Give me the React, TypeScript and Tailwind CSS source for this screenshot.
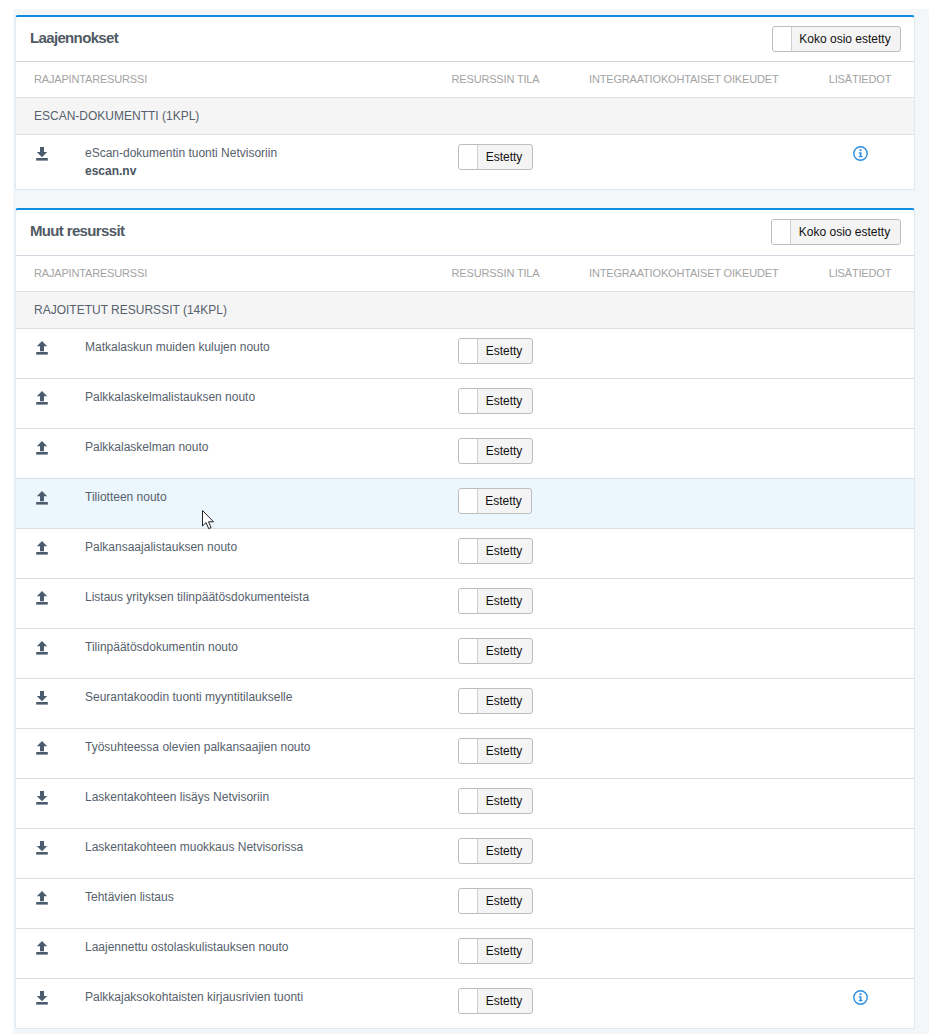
const cols = "grid grid-cols-[69px_340px_141px_240px_108px]";

function DownloadIcon() {
  return (
    <svg width="12" height="14" viewBox="0 0 12 14" className="block" fill="#4a5c6e">
      <path d="M4 0h4v5h3.2L6 10.2 0.8 5H4z" />
      <rect x="0.2" y="11" width="11.6" height="2.6" />
    </svg>
  );
}

function UploadIcon() {
  return (
    <svg width="12" height="14" viewBox="0 0 12 14" className="block" fill="#4a5c6e">
      <path d="M6 0l5.2 5.2H8v5H4v-5H0.8z" />
      <rect x="0.2" y="11" width="11.6" height="2.6" />
    </svg>
  );
}

function InfoIcon() {
  return (
    <svg width="15" height="15" viewBox="0 0 15 15" className="block">
      <circle cx="7.5" cy="7.5" r="6.7" fill="none" stroke="#2b8fe3" strokeWidth="1.4" />
      <rect x="6.6" y="3.2" width="1.9" height="1.9" fill="#2b8fe3" />
      <path d="M5.8 6.2h2.7v3.8h1v1.2H5.8V10h1V7.4h-1z" fill="#2b8fe3" />
    </svg>
  );
}

function Toggle({ label, width }: { label: string; width: string }) {
  return (
    <div className={`flex h-[26px] ${width} rounded-[3px] border border-[#bdbdbd] bg-[#f4f4f4] text-[12px] leading-[24px] text-[#111]`}>
      <span className="w-[19px] shrink-0 rounded-l-[3px] border-r border-[#d0d0d0] bg-white" />
      <span className="flex-1 pr-[2px] text-center">{label}</span>
    </div>
  );
}

function Row({
  name,
  code,
  dir,
  info,
  hover,
  tall,
}: {
  name: string;
  code?: string;
  dir: "up" | "down";
  info?: boolean;
  hover?: boolean;
  tall?: boolean;
}) {
  return (
    <div className={`${cols} border-t border-[#dcdfe2] ${tall ? "h-[55px]" : "h-[50px]"} ${hover ? "bg-[#ebf6fd]" : ""}`}>
      <div className="pl-[20px] pt-[12px]">{dir === "up" ? <UploadIcon /> : <DownloadIcon />}</div>
      <div className="pt-[9px] text-[12px] leading-[18px] text-[#56616c]">
        <div>{name}</div>
        {code && <div className="font-bold text-[#4a5560]">{code}</div>}
      </div>
      <div className="pl-[33px] pt-[9px]">
        <Toggle label="Estetty" width={hover ? "w-[74px]" : "w-[75px]"} />
      </div>
      <div />
      <div className="flex justify-center pt-[11px]">{info && <InfoIcon />}</div>
    </div>
  );
}

function Section({
  title,
  group,
  buttonWidth,
  headerHeight,
  children,
}: {
  title: string;
  group: string;
  buttonWidth: string;
  headerHeight: string;
  children: React.ReactNode;
}) {
  return (
    <section className="rounded-t-[3px] border-x border-b border-t-2 border-x-[#e3e8ed] border-b-[#e3e8ed] border-t-[#108de0] bg-white">
      <div className={`flex ${headerHeight} items-start justify-between pl-[14px] pr-[13px]`}>
        <h2 className="pt-[11px] text-[15px] font-bold leading-[20px] tracking-[-0.65px] text-[#505a64]">{title}</h2>
        <div className="pt-[9px]">
          <Toggle label="Koko osio estetty" width={buttonWidth} />
        </div>
      </div>
      <div className={`${cols} h-[36px] items-center border-t border-[#cfd6dd] text-[11px] tracking-[-0.17px] text-[#a3a3a3]`}>
        <div className="col-span-2 pl-[18px]">RAJAPINTARESURSSI</div>
        <div className="text-center">RESURSSIN TILA</div>
        <div className="pl-[23px]">INTEGRAATIOKOHTAISET OIKEUDET</div>
        <div className="text-center">LISÄTIEDOT</div>
      </div>
      <div className="flex h-[37px] items-center border-t border-[#dcdfe2] bg-[#f5f5f5] pl-[18px] text-[12px] text-[#56616c]">
        {group}
      </div>
      {children}
    </section>
  );
}

const resources: { name: string; dir: "up" | "down"; info?: boolean; hover?: boolean }[] = [
  { name: "Matkalaskun muiden kulujen nouto", dir: "up" },
  { name: "Palkkalaskelmalistauksen nouto", dir: "up" },
  { name: "Palkkalaskelman nouto", dir: "up" },
  { name: "Tiliotteen nouto", dir: "up", hover: true },
  { name: "Palkansaajalistauksen nouto", dir: "up" },
  { name: "Listaus yrityksen tilinpäätösdokumenteista", dir: "up" },
  { name: "Tilinpäätösdokumentin nouto", dir: "up" },
  { name: "Seurantakoodin tuonti myyntitilaukselle", dir: "down" },
  { name: "Työsuhteessa olevien palkansaajien nouto", dir: "up" },
  { name: "Laskentakohteen lisäys Netvisoriin", dir: "down" },
  { name: "Laskentakohteen muokkaus Netvisorissa", dir: "down" },
  { name: "Tehtävien listaus", dir: "up" },
  { name: "Laajennettu ostolaskulistauksen nouto", dir: "up" },
  { name: "Palkkajaksokohtaisten kirjausrivien tuonti", dir: "down", info: true },
];

export default function App() {
  return (
    <div className="relative h-[1034px] overflow-hidden bg-white pl-[13px] pr-px pt-[9px] font-['Liberation_Sans',Arial,sans-serif]">
      <div className="flex h-full w-[916px] flex-col gap-[18px] bg-[#f4f7fa] pl-[2px] pr-[14px] pt-[6px]">
        <Section title="Laajennokset" group="ESCAN-DOKUMENTTI (1KPL)" buttonWidth="w-[129px]" headerHeight="h-[44px]">
          <Row name="eScan-dokumentin tuonti Netvisoriin" code="escan.nv" dir="down" info tall />
        </Section>
        <Section title="Muut resurssit" group="RAJOITETUT RESURSSIT (14KPL)" buttonWidth="w-[130px]" headerHeight="h-[45px]">
          {resources.map((r) => (
            <Row key={r.name} {...r} />
          ))}
        </Section>
      </div>
      {/* mouse cursor */}
      <svg width="14" height="20" viewBox="0 0 14 20" className="absolute left-[202px] top-[510px]">
        <path d="M0.5 0.5v15.5l3.6-3.4 2.6 6 2.4-1-2.6-5.8h5z" fill="#fff" stroke="#222" strokeWidth="1" />
      </svg>
    </div>
  );
}
